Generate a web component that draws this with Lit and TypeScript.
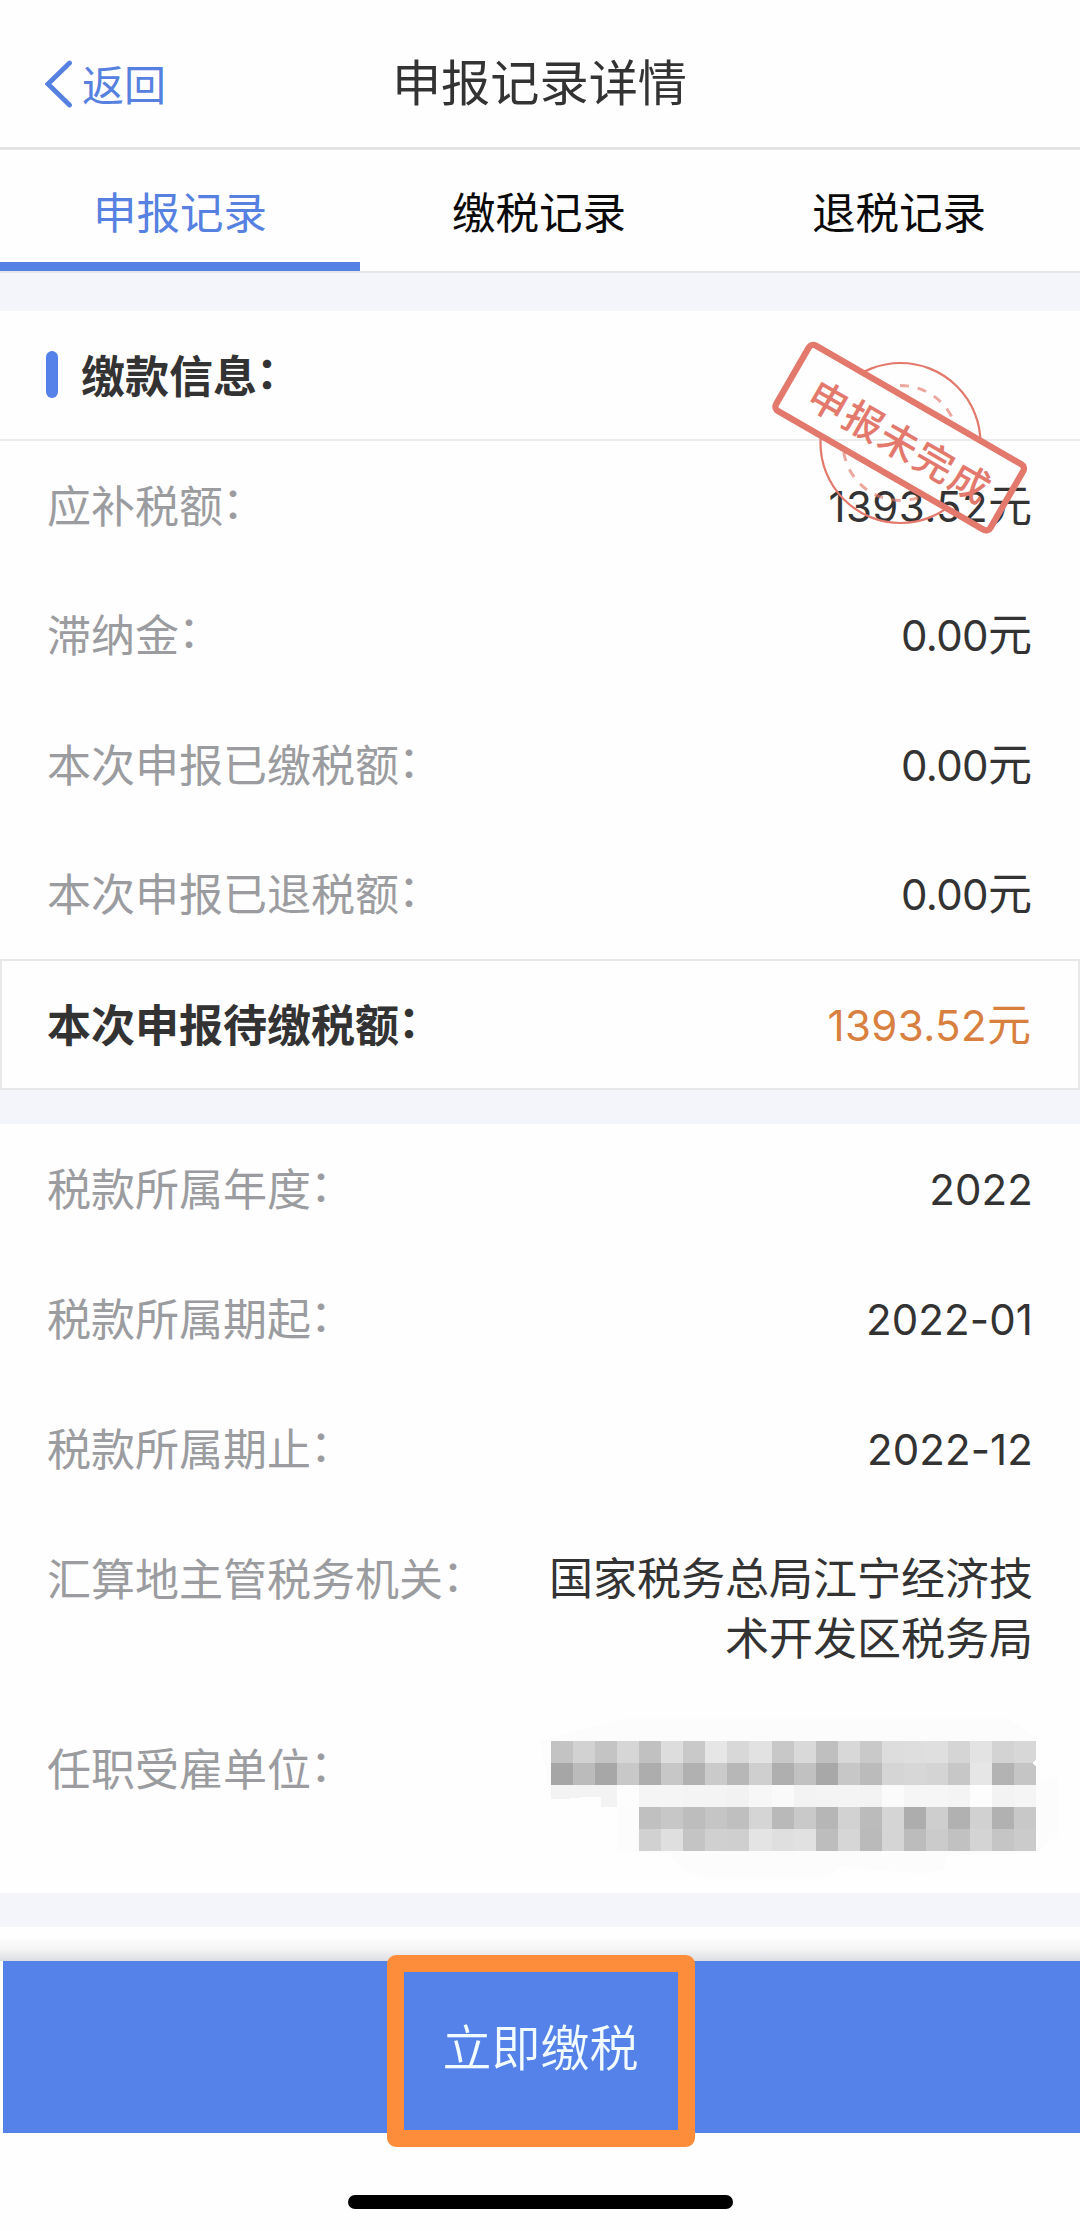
import { LitElement, html, css, svg } from "lit";
import { customElement } from "lit/decorators.js";

interface Entry {
  label: string;
  value: string[];
}

const payment: Entry[] = [
  { label: "应补税额", value: ["1393.52元"] },
  { label: "滞纳金", value: ["0.00元"] },
  { label: "本次申报已缴税额", value: ["0.00元"] },
  { label: "本次申报已退税额", value: ["0.00元"] },
];

const period: Entry[] = [
  { label: "税款所属年度", value: ["2022"] },
  { label: "税款所属期起", value: ["2022-01"] },
  { label: "税款所属期止", value: ["2022-12"] },
  { label: "汇算地主管税务机关", value: ["国家税务总局江宁经济技", "术开发区税务局"] },
];

// Grey level of every redaction cell, two hex digits each; ".." leaves a cell empty.
const mosaic = [
  "c3 d2 c4 d6 c1 dd c9 e6 d8 e2 c8 d9 bf d8 c9 dd de df d5 e3 d3 d7",
  "a6 bb a7 c8 ad c7 b1 ca b7 cf af c1 a8 c7 bb d5 d7 d4 c7 e6 b3 c5",
  ".. .. .. fd f5 f5 f4 f4 f2 f7 fa f3 f4 f4 f3 fb f6 f6 f4 fd f3 f5",
  ".. .. .. fc c0 c7 bd c5 bf d5 b9 c9 b6 d2 bb d5 ad ce b1 d1 b1 c8",
  ".. .. .. fc d1 df c4 d0 cf e4 df e1 bd d6 ba d5 bc cb c1 d4 c5 cb",
].map((r) => r.split(" "));

@customElement("app-root")
export class AppRoot extends LitElement {
  static styles = css`
    :host {
      display: block;
      width: 1080px;
      height: 2231px;
      overflow: hidden;
      background: #fefefe;
      color: #333;
      font-family: Inter, "Noto Sans CJK SC", sans-serif;
      font-size: 44px;
    }
    .page { display: flex; flex-direction: column; height: 2231px; }
    .cjk { font-family: "Noto Sans CJK SC", sans-serif; }
    .header {
      box-sizing: border-box;
      flex: none;
      height: 150px;
      padding: 48px 45px 0;
      border-bottom: 3px solid #e3e3e3;
      display: grid;
      grid-template-columns: 1fr auto 1fr;
      align-items: start;
      line-height: 64px;
    }
    .back { display: flex; align-items: center; gap: 10px; padding-top: 3px; color: #5681e0; font-size: 42px; line-height: 64px; }
    .chevron { display: block; width: 27px; height: 48px; margin-top: 2px; }
    .title { font-size: 49.2px; padding-right: 1px; }
    .tabs {
      box-sizing: border-box;
      flex: none;
      height: 123px;
      border-bottom: 2px solid #e6e6e8;
      display: grid;
      grid-template-columns: repeat(3, 1fr);
      text-align: center;
      font-size: 43.5px;
      line-height: 121px;
      color: #0a0a0a;
    }
    .tab { box-sizing: border-box; height: 121px; padding-right: 2px; }
    .active { padding-right: 0; color: #5681e0; border-bottom: 9px solid #5482e4; }
    .band { background: #f4f5fa; flex: none; }
    .b1 { height: 38px; }
    .b2 { height: 34px; }
    .section {
      position: relative;
      box-sizing: border-box;
      flex: none;
      height: 130px;
      border-bottom: 2px solid #ebebeb;
      padding: 0 46px;
      display: flex;
      align-items: center;
      gap: 23px;
      font-weight: 600;
      line-height: 126px;
    }
    .section .text { height: 128px; }
    .marker { width: 12px; height: 47px; border-radius: 6px; background: #5482e9; margin-bottom: 2px; }
    .stamp { position: absolute; left: 760px; top: 19px; width: 280px; height: 220px; z-index: 2; }
    .row {
      flex: none;
      display: flex;
      justify-content: space-between;
      align-items: flex-start;
      padding: 34.8px 47px 34.7px 47px;
      line-height: 60px;
    }
    .label { color: #9b9c9f; height: 60px; margin-top: -2px; margin-bottom: 2px; }
    .colon { position: relative; left: -1px; top: -4px; }
    .value { text-align: right; }
    .num { font-size: 42px; letter-spacing: 0.1px; }
    .money { letter-spacing: 0.4px; }
    .zero { letter-spacing: -0.6px; }
    .line { display: block; height: 60px; }
    .unit { margin-right: 1px; }
    .period { display: flex; flex-direction: column; }
    .period .row { padding-top: 35.2px; }
    .total {
      box-sizing: border-box;
      height: 131px;
      border: 2px solid #e8e8ea;
      padding: 34px 46px 0 45px;
    }
    .total .label { color: #333; font-weight: 600; }
    .total .value { color: #d8803f; }
    .employer { box-sizing: border-box; height: 189.4px; padding-right: 16px; }
    .period .employer { padding-right: 16px; }
    .mosaic { display: block; width: 560px; height: 160px; margin-top: -20px; }
    .gap { height: 34px; flex: none; background: linear-gradient(#fefefe 25%, #f5f5f6 65%, #dddee2); }
    .pay {
      position: relative;
      flex: none;
      height: 172px;
      margin-left: 3px;
      background: #5482e9;
      color: #f2fbff;
      font-size: 49px;
      font-weight: 350;
      line-height: 167px;
      text-align: center;
    }
    .paytext { padding-right: 2px; }
    .focus {
      position: absolute;
      box-sizing: border-box;
      left: 384px;
      top: -6px;
      width: 308px;
      height: 192px;
      border: 17.5px solid #fe8d3b;
      border-radius: 9px;
    }
    .home { flex: none; width: 385px; height: 14px; border-radius: 7px; background: #000; margin: 62px auto 0; }
  `;

  private label(text: string) {
    return html`<span class="label cjk">${text}<span class="colon">：</span></span>`;
  }

  private amount(text: string) {
    const digits = text.match(/^[\d.-]*/)![0];
    const rest = text.slice(digits.length);
    if (!digits) return html`<span class="line">${rest}</span>`;
    const kind = !rest ? "num" : Number(digits) === 0 ? "num zero" : "num money";
    return html`<span class="line"><span class=${kind}>${digits}</span>${rest ? html`<span class="unit">${rest}</span>` : null}</span>`;
  }

  private row(e: Entry) {
    return html`<div class="row">
      ${this.label(e.label)}
      <span class="value">${e.value.map((v) => this.amount(v))}</span>
    </div>`;
  }

  private stamp() {
    return html`<svg class="stamp" viewBox="760 330 280 220" fill="none" stroke="#e2796c">
      <mask id="outside" maskUnits="userSpaceOnUse" x="760" y="330" width="280" height="220">
        <rect x="760" y="330" width="280" height="220" fill="#fff" stroke="none" />
        <rect x="776" y="399" width="248" height="77" rx="6" fill="#000" stroke="none" transform="rotate(30 900 437.5)" />
      </mask>
      <g mask="url(#outside)">
        <circle cx="900.5" cy="443" r="80" stroke-width="2.2" />
        <circle cx="900.5" cy="443" r="57.5" stroke-width="3" stroke-dasharray="9 9" opacity=".65" />
      </g>
      <rect x="776" y="400" width="247.5" height="75.5" rx="5" stroke-width="6.3" transform="rotate(30 900 437.5)" />
      <text x="900.5" y="456.5" text-anchor="middle" transform="rotate(30 900 441)" font-family="Noto Sans CJK SC" font-size="39" font-weight="500" letter-spacing="1.8" fill="#e2796c" stroke="none">申报未完成</text>
    </svg>`;
  }

  private mosaic() {
    return html`<svg class="mosaic" viewBox="504 1719 560 160" shape-rendering="crispEdges">
      <path fill="#fcfcfc" d="M540 1741L620 1719H1010L1040 1741V1780L1058 1778V1835L1036 1853L945 1856V1868Q935 1874 910 1873L840 1866L830 1877H710Q680 1874 670 1855L632 1852Q615 1835 618 1807L600 1797L551 1798Z" />
      <path fill="#f3f3f3" d="M551 1785h66v22h-16v-10h-15l-22 2h-13z" />
      ${mosaic.map((cells, y) =>
        cells.map((c, x) =>
          c === ".."
            ? null
            : svg`<rect x=${551 + Math.round(x * 22.05)} y=${1741 + y * 22} width="23" height="22" fill=${`#${c}${c}${c}`} />`
        )
      )}
      <path fill="#fefefe" d="M1036 1760l-4 3 4 4h2v-7z" />
      <rect x="1036" y="1741" width="2" height="112" fill="#fdfdfd" />
    </svg>`;
  }

  render() {
    return html`<div class="page">
      <div class="header cjk">
        <div class="back">
          <svg class="chevron" viewBox="0 0 27 48" fill="none" stroke="#5681e0" stroke-width="4.8" stroke-linecap="round">
            <path d="M24.5 3L3 24L24.5 45" />
          </svg>
          <span>返回</span>
        </div>
        <div class="title">申报记录详情</div>
      </div>
      <div class="tabs cjk">
        <div class="tab active">申报记录</div>
        <div class="tab">缴税记录</div>
        <div class="tab">退税记录</div>
      </div>
      <div class="band b1"></div>
      <div class="section cjk">
        <div class="marker"></div>
        <span class="text">缴款信息<span class="colon">：</span></span>
        ${this.stamp()}
      </div>
      ${payment.map((e) => this.row(e))}
      <div class="row total">
        ${this.label("本次申报待缴税额")}
        <span class="value">${this.amount("1393.52元")}</span>
      </div>
      <div class="band b2"></div>
      <div class="period">
        ${period.map((e) => this.row(e))}
        <div class="row employer">
          ${this.label("任职受雇单位")}
          ${this.mosaic()}
        </div>
      </div>
      <div class="band b2"></div>
      <div class="gap"></div>
      <div class="pay cjk"><div class="paytext">立即缴税</div><div class="focus"></div></div>
      <div class="home"></div>
    </div>`;
  }
}
